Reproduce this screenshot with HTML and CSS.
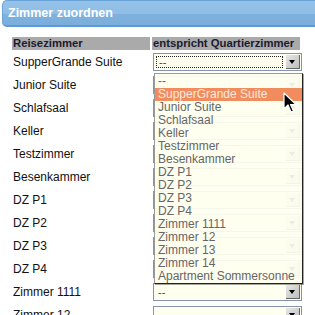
FILE: index.html
```html
<!DOCTYPE html>
<html lang="de">
<head>
  <meta charset="UTF-8">
  <title>Zimmer zuordnen</title>
  <link rel="stylesheet" href="styles.css">
</head>
<body>
  <div class="panel-head">Zimmer zuordnen</div>

  <div class="assign">
    <table class="assign-table">
      <tr>
        <th class="col-room">Reisezimmer</th>
        <th class="col-target">entspricht Quartierzimmer</th>
      </tr>
      <tr>
        <td>SupperGrande Suite</td>
        <td class="select-cell">
          <div class="fake-select focused"><span class="val">--</span><span class="btn"></span></div>
          <ul class="drop-list">
            <li>--</li>
            <li class="hover">SupperGrande Suite</li>
            <li>Junior Suite</li>
            <li>Schlafsaal</li>
            <li>Keller</li>
            <li>Testzimmer</li>
            <li>Besenkammer</li>
            <li>DZ P1</li>
            <li>DZ P2</li>
            <li>DZ P3</li>
            <li>DZ P4</li>
            <li>Zimmer 1111</li>
            <li>Zimmer 12</li>
            <li>Zimmer 13</li>
            <li>Zimmer 14</li>
            <li>Apartment Sommersonne</li>
          </ul>
          <svg class="cursor" width="14" height="22" viewBox="0 0 14 22">
            <path d="M1 1 L1 17 L5 13 L8 20 L10.5 19 L7.5 12.5 L13 12.5 Z" fill="#000" stroke="#fff" stroke-width="1.2" stroke-linejoin="round"/>
          </svg>
        </td>
      </tr>
      <tr><td>Junior Suite</td><td class="select-cell"><div class="fake-select"><span class="val">--</span><span class="btn"></span></div></td></tr>
      <tr><td>Schlafsaal</td><td class="select-cell"><div class="fake-select"><span class="val">--</span><span class="btn"></span></div></td></tr>
      <tr><td>Keller</td><td class="select-cell"><div class="fake-select"><span class="val">--</span><span class="btn"></span></div></td></tr>
      <tr><td>Testzimmer</td><td class="select-cell"><div class="fake-select"><span class="val">--</span><span class="btn"></span></div></td></tr>
      <tr><td>Besenkammer</td><td class="select-cell"><div class="fake-select"><span class="val">--</span><span class="btn"></span></div></td></tr>
      <tr><td>DZ P1</td><td class="select-cell"><div class="fake-select"><span class="val">--</span><span class="btn"></span></div></td></tr>
      <tr><td>DZ P2</td><td class="select-cell"><div class="fake-select"><span class="val">--</span><span class="btn"></span></div></td></tr>
      <tr><td>DZ P3</td><td class="select-cell"><div class="fake-select"><span class="val">--</span><span class="btn"></span></div></td></tr>
      <tr><td>DZ P4</td><td class="select-cell"><div class="fake-select"><span class="val">--</span><span class="btn"></span></div></td></tr>
      <tr><td>Zimmer 1111</td><td class="select-cell"><div class="fake-select"><span class="val">--</span><span class="btn"></span></div></td></tr>
      <tr><td>Zimmer 12</td><td class="select-cell"><div class="fake-select"><span class="val">--</span><span class="btn"></span></div></td></tr>
    </table>
  </div>
</body>
</html>
```

FILE: styles.css
```css
body {
    margin: 0;
    padding: 0;
    background: #fff;
    font-family: 'Liberation Sans', Arial, sans-serif;
    font-size: 12px;
    color: #111;
    overflow: hidden;
}

.panel-head {
    margin-left: 2px;
    height: 24px;
    line-height: 24px;
    padding-left: 5px;
    border: 1px solid #6aa3d8;
    border-right: none;
    border-bottom: 2px solid #5b9ad8;
    border-radius: 5px 0 0 5px;
    background: linear-gradient(#95c2e8 0%, #8ebde5 55%, #7fb1de 56%, #7caedc 100%);
    color: #fff;
    font-size: 12.5px;
    font-weight: bold;
    white-space: nowrap;
}

.assign {
    padding: 10px 0 0 12px;
}

.assign-table {
    table-layout: fixed;
    border-collapse: separate;
    border-spacing: 2px 0;
    margin-left: -2px;
    width: 292px;
}

.assign-table th {
    background: #aaaaaa;
    color: #1a1a30;
    font-size: 11.3px;
    font-weight: bold;
    text-align: left;
    height: 13px;
    padding: 0 0 0 1px;
    line-height: 13px;
    white-space: nowrap;
    overflow: hidden;
}

.col-room {
    width: 137px;
}

.col-target {
    width: 147px;
}

.assign-table td {
    height: 23px;
    padding: 0 0 0 1px;
    vertical-align: middle;
    white-space: nowrap;
}

.select-cell {
    position: relative;
}

.fake-select {
    display: flex;
    align-items: center;
    height: 16px;
    width: 147px;
    border: 1px solid #8494ad;
    background: #fffff0;
    position: relative;
}

.fake-select .val {
    flex: 1;
    padding-left: 4px;
    color: #444;
    font-size: 11px;
    line-height: 16px;
}

.fake-select.focused .val {
    outline: 1px dotted #222;
    outline-offset: -2px;
    margin: 1px 2px 1px 1px;
    line-height: 14px;
}

.fake-select .btn {
    width: 14px;
    height: 14px;
    margin-right: 1px;
    background: linear-gradient(135deg, #e8e8e8, #bdbdbd);
    border-right: 1px solid #666;
    border-bottom: 1px solid #666;
    box-sizing: border-box;
    position: relative;
}

.fake-select .btn::after {
    content: "";
    position: absolute;
    left: 3px;
    top: 5px;
    border-left: 3.5px solid transparent;
    border-right: 3.5px solid transparent;
    border-top: 4px solid #000;
}

.drop-list {
    position: absolute;
    left: 2px;
    top: 23px;
    z-index: 5;
    width: 147px;
    margin: 0;
    padding: 1px 0 0;
    list-style: none;
    background: rgba(255, 255, 240, 0.93);
    border: 1px solid #9a9a9a;
    border-right: 1px solid #222;
    border-bottom: 1px solid #222;
    box-shadow: 1px 1px 0 rgba(0, 0, 0, 0.35);
}

.drop-list li {
    height: 13px;
    line-height: 13px;
    padding-left: 3px;
    color: #666;
    font-size: 12px;
    white-space: nowrap;
}

.drop-list li.hover {
    background: #f08c5e;
    color: #fde8dc;
}

.cursor {
    position: absolute;
    left: 131px;
    top: 42px;
    z-index: 6;
}
```
